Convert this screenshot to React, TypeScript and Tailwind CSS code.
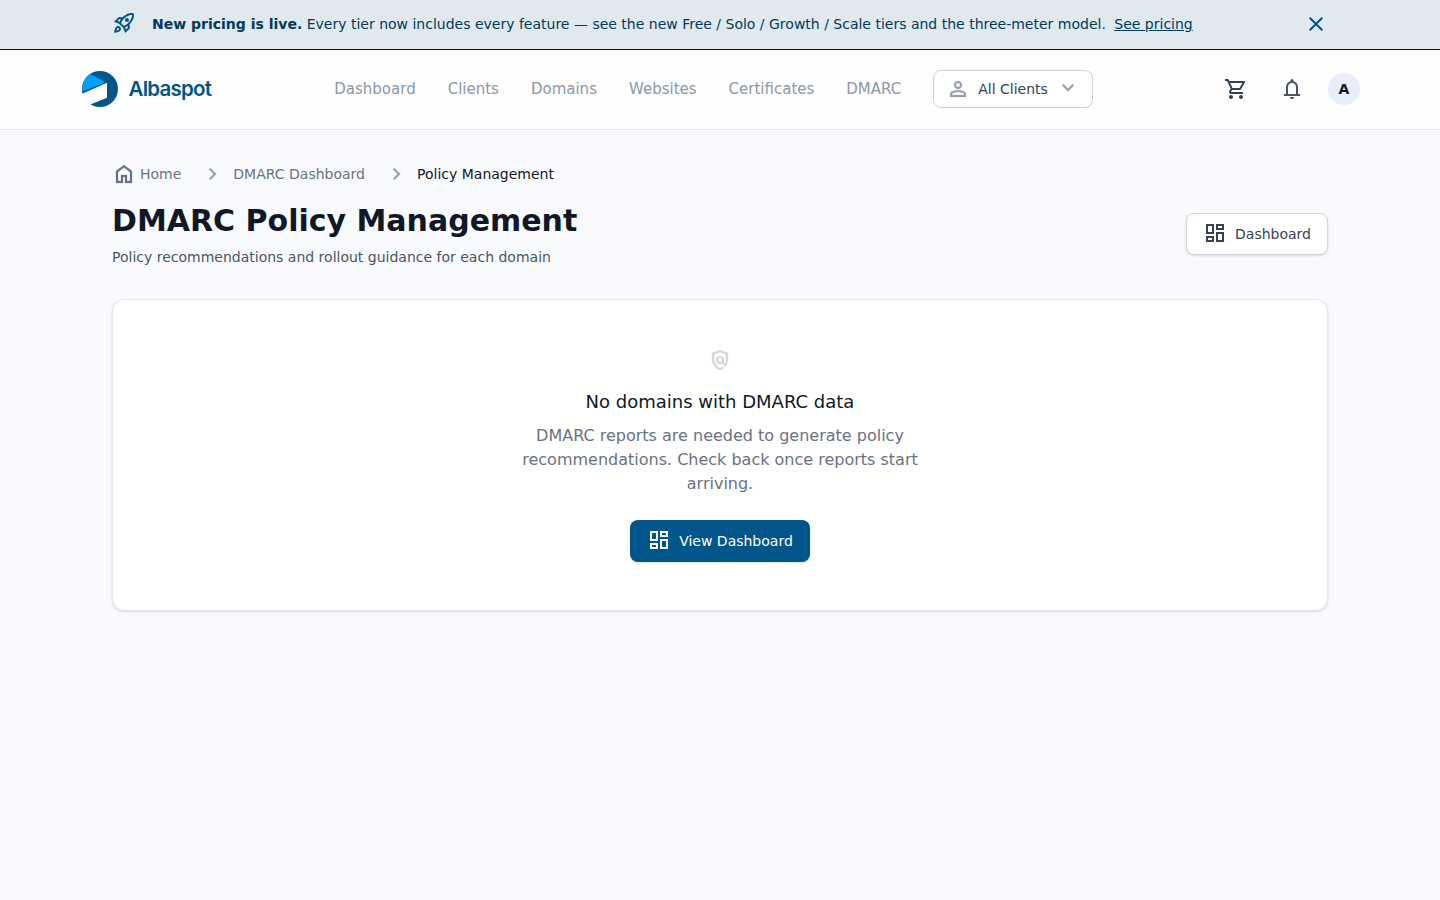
import type { ReactNode } from 'react';
import { MdOutlineRocketLaunch, MdOutlineShoppingCart } from 'react-icons/md';

const NAV_ITEMS = ['Dashboard', 'Clients', 'Domains', 'Websites', 'Certificates', 'DMARC'];

const ICON_PATHS = {
  home: 'M240-200h120v-240h240v240h120v-360L480-740 240-560v360Zm-80 80v-480l320-240 320 240v480H520v-240h-80v240H160Z',
  close: 'm256-200-56-56 224-224-224-224 56-56 224 224 224-224 56 56-224 224 224 224-56 56-224-224-224 224Z',
  chevronRight: 'M504-480 320-664l56-56 240 240-240 240-56-56 184-184Z',
  chevronDown: 'M480-344 240-584l56-56 184 184 184-184 56 56-240 240Z',
  person:
    'M480-480q-66 0-113-47t-47-113q0-66 47-113t113-47q66 0 113 47t47 113q0 66-47 113t-113 47ZM160-160v-112q0-34 17.5-62.5T224-378q62-31 126-46.5T480-440q66 0 130 15.5T736-378q29 15 46.5 43.5T800-272v112H160Zm80-80h480v-32q0-11-5.5-20T700-306q-54-27-109-40.5T480-360q-56 0-111 13.5T260-306q-9 5-14.5 14t-5.5 20v32Zm240-320q33 0 56.5-23.5T560-640q0-33-23.5-56.5T480-720q-33 0-56.5 23.5T400-640q0 33 23.5 56.5T480-560Z',
  bell: 'M160-200v-80h80v-280q0-83 50-147.5T420-792v-28q0-25 17.5-42.5T480-880q25 0 42.5 17.5T540-820v28q80 20 130 84.5T720-560v280h80v80H160Zm320 120q-33 0-56.5-23.5T400-160h160q0 33-23.5 56.5T480-80ZM320-280h320v-280q0-66-47-113t-113-47q-66 0-113 47t-47 113v280Z',
  dashboard:
    'M520-600v-240h320v240H520ZM120-440v-400h320v400H120Zm400 320v-400h320v400H520Zm-400 0v-240h320v240H120Zm80-400h160v-240H200v240Zm400 320h160v-240H600v240Zm0-480h160v-80H600v80ZM200-200h160v-80H200v80Z',
  policy:
    'M480-80q-139-35-229.5-159.5T160-516v-244l320-120 320 120v244q0 85-29 163.5T688-214L560-342q-18 11-38.5 16.5T480-320q-66 0-113-47t-47-113q0-66 47-113t113-47q66 0 113 47t47 113q0 22-5.5 42.5T618-398l60 60q20-41 31-86t11-92v-189l-240-90-240 90v189q0 121 68 220t172 132q26-8 49.5-20.5T576-214l56 56q-33 27-71.5 47T480-80Zm0-320q33 0 56.5-23.5T560-480q0-33-23.5-56.5T480-560q-33 0-56.5 23.5T400-480q0 33 23.5 56.5T480-400Z',
};

function Icon({ name, className = '' }: { name: keyof typeof ICON_PATHS; className?: string }) {
  return (
    <svg viewBox="0 -960 960 960" fill="currentColor" className={`size-6 shrink-0 ${className}`}>
      <path d={ICON_PATHS[name]} />
    </svg>
  );
}

function Logo() {
  return (
    <a href="#" className="flex w-[132px] items-center">
      <svg viewBox="0 0 132 40" className="h-10 w-[132px]">
        <clipPath id="logo-disc">
          <circle cx="20" cy="20" r="18" />
        </clipPath>
        <g clipPath="url(#logo-disc)">
          <path d="M0 0h40v40H0Z" fill="#00568a" />
          <path d="M9 4.5 24 12.3 23 14.8 0 23V6Z" fill="#00a2ff" />
        </g>
        <path d="M0 25.8 27 13.8V28.7L9 36 4 40-2 36Z" fill="#fefefe" />
        <text
          x="48.5"
          y="27"
          fill="#00568a"
          fontFamily="Inter, sans-serif"
          fontWeight="600"
          fontSize="20.5"
          textLength="83.5"
          lengthAdjust="spacing"
        >
          Albaspot
        </text>
      </svg>
    </a>
  );
}

function Crumb({ children }: { children: ReactNode }) {
  return (
    <li className="flex items-center">
      <Icon name="chevronRight" className="mr-2 stroke-current stroke-[12] text-gray-400" />
      {children}
    </li>
  );
}

export default function App() {
  return (
    <div className="min-h-screen bg-[#f8fafd] font-['DejaVu_Sans',sans-serif] text-gray-900">
      {/* Announcement */}
      <div className="h-[50px] border-b border-[#03111c] bg-[#dfe9ee]">
        <div className="mx-auto flex h-12 max-w-[1216px] items-center text-sm text-[#003a5d]">
          <MdOutlineRocketLaunch className="mr-4 mb-0.5 size-6 text-[#00568a]" />
          <p className="flex-1">
            <strong className="font-bold">New pricing is live.</strong> Every tier now includes every feature — see the
            new Free / Solo / Growth / Scale tiers and the three-meter model.{' '}
            <a href="#" className="ml-1 underline">See pricing</a>
          </p>
          <button aria-label="Dismiss">
            <Icon name="close" className="text-[#00568a]" />
          </button>
        </div>
      </div>

      {/* Main navigation */}
      <header className="flex h-20 items-center justify-between border-b border-gray-200 bg-[#fefefe] px-20 pb-px">
        <Logo />
        <nav className="mr-[8.5px] flex items-center gap-8 text-[15px] text-[#8d97a8]">
          {NAV_ITEMS.map(item => (
            <a key={item} href="#">{item}</a>
          ))}
          <button className="flex h-[38px] w-40 items-center rounded-lg border border-[#d0d1dc] bg-white px-3 text-sm text-gray-700">
            <Icon name="person" className="mr-2 stroke-current stroke-[12] text-gray-400" />
            All Clients
            <Icon name="chevronDown" className="mb-0.5 ml-2 stroke-current stroke-[12] text-gray-400" />
          </button>
        </nav>
        <div className="flex items-center">
          <MdOutlineShoppingCart className="mr-8 size-6 text-gray-700" />
          <Icon name="bell" className="mr-6 text-gray-600" />
          <span className="flex size-8 items-center justify-center rounded-full bg-[#e8eefc] text-sm font-bold">A</span>
        </div>
      </header>

      <main className="mx-auto max-w-[1216px] pt-8">
        <ol className="flex h-6 items-center gap-5 text-sm text-gray-500">
          <li className="flex items-center gap-1">
            <Icon name="home" className="stroke-current stroke-[10]" />
            Home
          </li>
          <Crumb>DMARC Dashboard</Crumb>
          <Crumb><span className="text-gray-900">Policy Management</span></Crumb>
        </ol>

        <div className="mt-[17px] flex items-center justify-between">
          <div>
            <h1 className="text-3xl font-bold">DMARC Policy Management</h1>
            <p className="mt-2 text-sm text-gray-600">Policy recommendations and rollout guidance for each domain</p>
          </div>
          <button className="mb-0.5 flex h-[42px] items-center rounded-lg border border-gray-300 bg-white px-4 text-sm text-gray-700 shadow-sm">
            <Icon name="dashboard" className="mr-2 mb-0.5" />
            Dashboard
          </button>
        </div>

        {/* Empty state */}
        <section className="mt-8 flex h-[312px] flex-col items-center rounded-xl border border-gray-200 bg-white pt-12 shadow-sm">
          <Icon name="policy" className="stroke-current stroke-[10] text-gray-300" />
          <h2 className="mt-4 text-lg">No domains with DMARC data</h2>
          <p className="mt-2 w-[448px] text-center text-base text-gray-500">
            DMARC reports are needed to generate policy recommendations. Check back once reports start arriving.
          </p>
          <button className="mt-6 flex h-[42px] items-center rounded-lg bg-[#00568a] px-[17px] text-sm text-white shadow-sm">
            <Icon name="dashboard" className="mr-2 mb-0.5" />
            View Dashboard
          </button>
        </section>
      </main>
    </div>
  );
}
